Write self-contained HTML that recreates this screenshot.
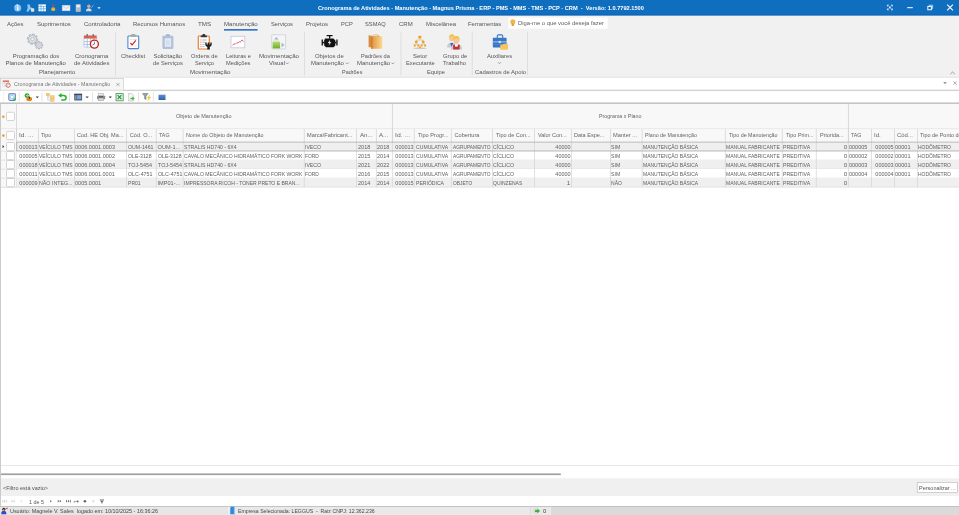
<!DOCTYPE html><html><head><meta charset="utf-8"><title>Cronograma de Atividades - Manutenção</title><style>
*{box-sizing:border-box;margin:0;padding:0}
html,body{width:959px;height:515px;overflow:hidden;background:#fff}
body{position:relative;font-family:"Liberation Sans",sans-serif;font-size:6px;color:#444}
.abs{position:absolute}
.t{position:absolute;white-space:pre;transform-origin:0 50%}
.t.r{transform-origin:100% 50%}
.t.c{transform-origin:50% 50%}
.rb{font-size:5.9px;color:#565656}
.g{font-size:5.6px;color:#606060}
.h{font-size:5.6px;color:#646464}
.cb{position:absolute;left:6.3px;width:8.4px;height:8.2px;background:#fff;border:0.6px solid #bdbdbd;border-radius:1.2px}
</style></head><body>
<svg class="abs" style="left:0;top:0" width="959" height="515" viewBox="0 0 959 515"><rect x="0" y="0" width="959" height="15.8" fill="#0f65b8"/><rect x="0" y="0" width="959" height="14" fill="#106ebe"/><rect x="0" y="15.8" width="959" height="61.4" fill="#f1f1f1"/><rect x="224" y="29.1" width="33.6" height="1.5" fill="#2268c0"/><rect x="508.5" y="17.6" width="99.2" height="11" fill="#fff"/><rect x="115" y="32.3" width="0.8" height="43" fill="#dadada"/><rect x="304" y="32.3" width="0.8" height="43" fill="#dadada"/><rect x="400.6" y="32.3" width="0.8" height="43" fill="#dadada"/><rect x="471.8" y="32.3" width="0.8" height="43" fill="#dadada"/><rect x="527.1" y="32.3" width="0.8" height="43" fill="#dadada"/><rect x="0" y="76.6" width="959" height="1.5" fill="#e9e9e9"/><rect x="0" y="78" width="959" height="11.6" fill="#fff"/><rect x="0" y="77.5" width="124" height="1" fill="#ececec"/><rect x="0.3" y="78.4" width="123.1" height="12" fill="#f6f6f6" stroke="#c6c6c6" stroke-width="0.6"/><rect x="0" y="89.4" width="959" height="0.9" fill="#e6e6e6"/><rect x="0" y="90.2" width="959" height="1" fill="#c8c8c8"/><rect x="0.7" y="89.4" width="122.4" height="1.2" fill="#f0f0f0"/><rect x="0" y="91.2" width="959" height="10.9" fill="#fff"/><rect x="0" y="102" width="959" height="1" fill="#dcdcdc"/><rect x="0" y="103" width="959" height="1" fill="#c4c4c4"/><rect x="0" y="104" width="959" height="362" fill="#fff"/><rect x="0.8" y="104" width="958.2" height="25.1" fill="#f8f8f8"/><rect x="0.8" y="128.7" width="958.2" height="0.7" fill="#cdcdcd"/><rect x="0.8" y="129.1" width="958.2" height="12.9" fill="#f8f8f8"/><rect x="16.15" y="104" width="0.7" height="38" fill="#cdcdcd"/><rect x="391.95" y="104" width="0.7" height="38" fill="#cdcdcd"/><rect x="847.95" y="104" width="0.7" height="38" fill="#cdcdcd"/><rect x="16.15" y="129.1" width="0.7" height="58.2" fill="#d2d2d2"/><rect x="38.05" y="129.1" width="0.7" height="58.2" fill="#d2d2d2"/><rect x="74.15" y="129.1" width="0.7" height="58.2" fill="#d2d2d2"/><rect x="126.05" y="129.1" width="0.7" height="58.2" fill="#d2d2d2"/><rect x="155.85" y="129.1" width="0.7" height="58.2" fill="#d2d2d2"/><rect x="182.75" y="129.1" width="0.7" height="58.2" fill="#d2d2d2"/><rect x="303.85" y="129.1" width="0.7" height="58.2" fill="#d2d2d2"/><rect x="356.05" y="129.1" width="0.7" height="58.2" fill="#d2d2d2"/><rect x="375.95" y="129.1" width="0.7" height="58.2" fill="#d2d2d2"/><rect x="391.95" y="129.1" width="0.7" height="58.2" fill="#d2d2d2"/><rect x="413.85" y="129.1" width="0.7" height="58.2" fill="#d2d2d2"/><rect x="450.95" y="129.1" width="0.7" height="58.2" fill="#d2d2d2"/><rect x="492.05" y="129.1" width="0.7" height="58.2" fill="#d2d2d2"/><rect x="534.05" y="129.1" width="0.7" height="58.2" fill="#d2d2d2"/><rect x="571.05" y="129.1" width="0.7" height="58.2" fill="#d2d2d2"/><rect x="610.05" y="129.1" width="0.7" height="58.2" fill="#d2d2d2"/><rect x="641.75" y="129.1" width="0.7" height="58.2" fill="#d2d2d2"/><rect x="724.95" y="129.1" width="0.7" height="58.2" fill="#d2d2d2"/><rect x="781.85" y="129.1" width="0.7" height="58.2" fill="#d2d2d2"/><rect x="815.85" y="129.1" width="0.7" height="58.2" fill="#d2d2d2"/><rect x="847.95" y="129.1" width="0.7" height="58.2" fill="#d2d2d2"/><rect x="871.15" y="129.1" width="0.7" height="58.2" fill="#d2d2d2"/><rect x="894.25" y="129.1" width="0.7" height="58.2" fill="#d2d2d2"/><rect x="917.15" y="129.1" width="0.7" height="58.2" fill="#d2d2d2"/><rect x="0.8" y="142.1" width="958.2" height="9" fill="#efefef"/><rect x="0.8" y="150.75" width="958.2" height="0.7" fill="#dcdcdc"/><rect x="0.8" y="151.1" width="958.2" height="9" fill="#fff"/><rect x="0.8" y="159.75" width="958.2" height="0.7" fill="#dcdcdc"/><rect x="0.8" y="160.1" width="958.2" height="9" fill="#efefef"/><rect x="0.8" y="168.75" width="958.2" height="0.7" fill="#dcdcdc"/><rect x="0.8" y="169.1" width="958.2" height="9" fill="#fff"/><rect x="0.8" y="177.75" width="958.2" height="0.7" fill="#dcdcdc"/><rect x="0.8" y="178.1" width="958.2" height="9" fill="#efefef"/><rect x="0.8" y="186.75" width="958.2" height="0.7" fill="#dcdcdc"/><rect x="16.15" y="142.1" width="0.7" height="45" fill="#d4d4d4"/><rect x="38.05" y="142.1" width="0.7" height="45" fill="#d4d4d4"/><rect x="74.15" y="142.1" width="0.7" height="45" fill="#d4d4d4"/><rect x="126.05" y="142.1" width="0.7" height="45" fill="#d4d4d4"/><rect x="155.85" y="142.1" width="0.7" height="45" fill="#d4d4d4"/><rect x="182.75" y="142.1" width="0.7" height="45" fill="#d4d4d4"/><rect x="303.85" y="142.1" width="0.7" height="45" fill="#d4d4d4"/><rect x="356.05" y="142.1" width="0.7" height="45" fill="#d4d4d4"/><rect x="375.95" y="142.1" width="0.7" height="45" fill="#d4d4d4"/><rect x="391.95" y="142.1" width="0.7" height="45" fill="#d4d4d4"/><rect x="413.85" y="142.1" width="0.7" height="45" fill="#d4d4d4"/><rect x="450.95" y="142.1" width="0.7" height="45" fill="#d4d4d4"/><rect x="492.05" y="142.1" width="0.7" height="45" fill="#d4d4d4"/><rect x="534.05" y="142.1" width="0.7" height="45" fill="#d4d4d4"/><rect x="571.05" y="142.1" width="0.7" height="45" fill="#d4d4d4"/><rect x="610.05" y="142.1" width="0.7" height="45" fill="#d4d4d4"/><rect x="641.75" y="142.1" width="0.7" height="45" fill="#d4d4d4"/><rect x="724.95" y="142.1" width="0.7" height="45" fill="#d4d4d4"/><rect x="781.85" y="142.1" width="0.7" height="45" fill="#d4d4d4"/><rect x="815.85" y="142.1" width="0.7" height="45" fill="#d4d4d4"/><rect x="847.95" y="142.1" width="0.7" height="45" fill="#d4d4d4"/><rect x="871.15" y="142.1" width="0.7" height="45" fill="#d4d4d4"/><rect x="894.25" y="142.1" width="0.7" height="45" fill="#d4d4d4"/><rect x="917.15" y="142.1" width="0.7" height="45" fill="#d4d4d4"/><rect x="0.9" y="142.1" width="15.5" height="45" fill="#f8f8f8"/><rect x="0.9" y="150.75" width="15.5" height="0.7" fill="#dcdcdc"/><rect x="0.9" y="159.75" width="15.5" height="0.7" fill="#dcdcdc"/><rect x="0.9" y="168.75" width="15.5" height="0.7" fill="#dcdcdc"/><rect x="0.9" y="177.75" width="15.5" height="0.7" fill="#dcdcdc"/><rect x="0.9" y="186.75" width="15.5" height="0.7" fill="#dcdcdc"/><rect x="16.5" y="141.7" width="942.5" height="0.8" fill="#adadad"/><rect x="16.5" y="150.6" width="942.5" height="0.8" fill="#adadad"/><rect x="16.4" y="142.1" width="0.8" height="9" fill="#a4a4a4"/><rect x="0.8" y="465" width="958.2" height="0.7" fill="#dedede"/><rect x="0.8" y="473.4" width="560" height="1.7" fill="#a0a0a0"/><rect x="0" y="478.3" width="959" height="18" fill="#f0f0f0"/><rect x="917.2" y="482.3" width="40.4" height="10.4" fill="#fff" stroke="#b4b4b4" stroke-width="0.6"/><rect x="0" y="496.3" width="959" height="9.7" fill="#fff"/><rect x="0" y="506" width="959" height="9" fill="#dadada"/><rect x="0" y="506" width="228" height="9" fill="#e6e6e6"/><rect x="228.4" y="506" width="322" height="9" fill="#e9e9e9"/><rect x="0" y="506" width="959" height="0.7" fill="#b4b4b4"/><rect x="228" y="506.5" width="0.6" height="8.5" fill="#f8f8f8"/><rect x="530.5" y="506.5" width="0.6" height="8.5" fill="#cfcfcf"/><rect x="550.5" y="506.5" width="0.6" height="8.5" fill="#f4f4f4"/><rect x="0" y="104" width="0.9" height="402" fill="#c6c6c6"/><rect x="6.5" y="142.5" width="8" height="8.2" rx="1.2" fill="#fff" stroke="#c2c2c2" stroke-width="0.7"/><rect x="6.5" y="151.5" width="8" height="8.2" rx="1.2" fill="#fff" stroke="#c2c2c2" stroke-width="0.7"/><rect x="6.5" y="160.5" width="8" height="8.2" rx="1.2" fill="#fff" stroke="#c2c2c2" stroke-width="0.7"/><rect x="6.5" y="169.5" width="8" height="8.2" rx="1.2" fill="#fff" stroke="#c2c2c2" stroke-width="0.7"/><rect x="6.5" y="178.5" width="8" height="8.2" rx="1.2" fill="#fff" stroke="#c2c2c2" stroke-width="0.7"/><rect x="6.5" y="112.3" width="8" height="8.2" rx="1.2" fill="#fff" stroke="#c2c2c2" stroke-width="0.7"/><rect x="6.5" y="131.4" width="8" height="8.2" rx="1.2" fill="#fff" stroke="#c2c2c2" stroke-width="0.7"/></svg>
<div id="txt" class="abs" style="left:0;top:0;width:959px;height:515px;will-change:transform">
<span class="t " style="transform:scaleX(0.974);left:317.50px;top:3.60px;line-height:8px;height:8px;color:#fff;font-size:5.8px;font-weight:bold">Cronograma de Atividades - Manutenção - Magnus Prisma - ERP - PMS - MMS - TMS - PCP - CRM  -  Versão: 1.0.7792.1500</span>
<span class="t rb" style="transform:scaleX(0.968);left:7.20px;top:20.30px;line-height:8px;height:8px;font-size:6.1px">Ações</span>
<span class="t rb" style="transform:scaleX(0.988);left:36.80px;top:19.60px;line-height:8px;height:8px;font-size:6.1px">Suprimentos</span>
<span class="t rb" style="left:83.90px;top:19.60px;line-height:8px;height:8px;font-size:6.1px">Controladoria</span>
<span class="t rb" style="transform:scaleX(0.974);left:133.10px;top:19.60px;line-height:8px;height:8px;font-size:6.1px">Recursos Humanos</span>
<span class="t rb" style="transform:scaleX(1.025);left:198.00px;top:19.60px;line-height:8px;height:8px;font-size:6.1px">TMS</span>
<span class="t rb" style="transform:scaleX(1.005);left:223.80px;top:19.60px;line-height:8px;height:8px;font-size:6.1px">Manutenção</span>
<span class="t rb" style="transform:scaleX(0.941);left:270.60px;top:19.60px;line-height:8px;height:8px;font-size:6.1px">Serviços</span>
<span class="t rb" style="transform:scaleX(0.984);left:306.00px;top:19.60px;line-height:8px;height:8px;font-size:6.1px">Projetos</span>
<span class="t rb" style="transform:scaleX(0.934);left:340.80px;top:19.60px;line-height:8px;height:8px;font-size:6.1px">PCP</span>
<span class="t rb" style="transform:scaleX(0.940);left:365.40px;top:19.60px;line-height:8px;height:8px;font-size:6.1px">SSMAQ</span>
<span class="t rb" style="transform:scaleX(0.986);left:399.00px;top:19.60px;line-height:8px;height:8px;font-size:6.1px">CRM</span>
<span class="t rb" style="transform:scaleX(0.973);left:425.60px;top:19.60px;line-height:8px;height:8px;font-size:6.1px">Miscelânea</span>
<span class="t rb" style="transform:scaleX(0.964);left:468.10px;top:19.60px;line-height:8px;height:8px;font-size:6.1px">Ferramentas</span>
<span class="t rb" style="transform:scaleX(1.011);left:518.00px;top:18.70px;line-height:8px;height:8px;color:#606060;font-size:5.8px">Diga-me o que você deseja fazer</span>
<span class="t rb" style="left:12.80px;top:52.10px;line-height:8px;height:8px;">Programação dos</span>
<span class="t rb" style="left:5.60px;top:59.40px;line-height:8px;height:8px;">Planos de Manutenção</span>
<span class="t rb" style="transform:scaleX(1.020);left:74.80px;top:52.10px;line-height:8px;height:8px;">Cronograma</span>
<span class="t rb" style="transform:scaleX(1.010);left:74.00px;top:59.40px;line-height:8px;height:8px;">de Atividades</span>
<span class="t rb" style="transform:scaleX(1.012);left:121.00px;top:52.10px;line-height:8px;height:8px;">Checklist</span>
<span class="t rb" style="left:153.50px;top:52.10px;line-height:8px;height:8px;">Solicitação</span>
<span class="t rb" style="transform:scaleX(0.971);left:152.80px;top:59.40px;line-height:8px;height:8px;">de Serviços</span>
<span class="t rb" style="transform:scaleX(0.967);left:190.60px;top:52.10px;line-height:8px;height:8px;">Ordens de</span>
<span class="t rb" style="transform:scaleX(0.967);left:194.50px;top:59.40px;line-height:8px;height:8px;">Serviço</span>
<span class="t rb" style="transform:scaleX(0.962);left:225.60px;top:52.10px;line-height:8px;height:8px;">Leituras e</span>
<span class="t rb" style="transform:scaleX(0.968);left:226.10px;top:59.40px;line-height:8px;height:8px;">Medições</span>
<span class="t rb" style="transform:scaleX(1.044);left:259.00px;top:52.10px;line-height:8px;height:8px;">Movimentação</span>
<span class="t rb" style="left:269.00px;top:59.40px;line-height:8px;height:8px;">Visual</span>
<span class="t rb" style="transform:scaleX(1.007);left:314.80px;top:52.10px;line-height:8px;height:8px;">Objetos de</span>
<span class="t rb" style="transform:scaleX(1.015);left:310.60px;top:59.40px;line-height:8px;height:8px;">Manutenção</span>
<span class="t rb" style="transform:scaleX(0.956);left:360.60px;top:52.10px;line-height:8px;height:8px;">Padrões da</span>
<span class="t rb" style="transform:scaleX(1.021);left:356.80px;top:59.40px;line-height:8px;height:8px;">Manutenção</span>
<span class="t rb" style="left:413.10px;top:52.10px;line-height:8px;height:8px;">Setor</span>
<span class="t rb" style="transform:scaleX(0.977);left:406.10px;top:59.40px;line-height:8px;height:8px;">Executante</span>
<span class="t rb" style="transform:scaleX(0.989);left:442.60px;top:52.10px;line-height:8px;height:8px;">Grupo de</span>
<span class="t rb" style="transform:scaleX(0.994);left:443.10px;top:59.40px;line-height:8px;height:8px;">Trabalho</span>
<span class="t rb" style="transform:scaleX(0.983);left:487.30px;top:52.10px;line-height:8px;height:8px;">Auxiliares</span>
<span class="t rb" style="transform:scaleX(1.005);left:39.00px;top:68.30px;line-height:8px;height:8px;">Planejamento</span>
<span class="t rb" style="transform:scaleX(1.054);left:189.80px;top:68.30px;line-height:8px;height:8px;">Movimentação</span>
<span class="t rb" style="transform:scaleX(0.929);left:342.30px;top:68.30px;line-height:8px;height:8px;">Padrões</span>
<span class="t rb" style="transform:scaleX(0.976);left:427.30px;top:68.30px;line-height:8px;height:8px;">Equipe</span>
<span class="t rb" style="transform:scaleX(0.992);left:474.50px;top:68.30px;line-height:8px;height:8px;">Cadastros de Apoio</span>
<span class="t g" style="transform:scaleX(0.946);left:13.80px;top:80.00px;line-height:8px;height:8px;color:#767676">Cronograma de Atividades - Manutenção</span>
<span class="t h" style="transform:scaleX(0.980);left:176.00px;top:112.30px;line-height:8px;height:8px;">Objeto de Manutenção</span>
<span class="t h" style="transform:scaleX(0.947);left:598.60px;top:112.30px;line-height:8px;height:8px;">Programa x Plano</span>
<span class="t h" style="transform:scaleX(1.158);left:18.80px;top:131.40px;line-height:8px;height:8px;">Id. ...</span>
<span class="t h" style="transform:scaleX(0.954);left:41.20px;top:131.40px;line-height:8px;height:8px;">Tipo</span>
<span class="t h" style="transform:scaleX(0.988);left:76.80px;top:131.40px;line-height:8px;height:8px;">Cod. HE Obj. Ma...</span>
<span class="t h" style="left:129.80px;top:131.40px;line-height:8px;height:8px;">Cód. O...</span>
<span class="t h" style="transform:scaleX(0.955);left:159.40px;top:131.40px;line-height:8px;height:8px;">TAG</span>
<span class="t h" style="transform:scaleX(0.958);left:186.10px;top:131.40px;line-height:8px;height:8px;">Nome do Objeto de Manutenção</span>
<span class="t h" style="transform:scaleX(1.007);left:306.80px;top:131.40px;line-height:8px;height:8px;">Marca\Fabricant...</span>
<span class="t h" style="transform:scaleX(1.103);left:359.50px;top:131.40px;line-height:8px;height:8px;">An...</span>
<span class="t h" style="transform:scaleX(1.094);left:379.00px;top:131.40px;line-height:8px;height:8px;">A...</span>
<span class="t h" style="transform:scaleX(1.214);left:395.10px;top:131.40px;line-height:8px;height:8px;">Id. ...</span>
<span class="t h" style="transform:scaleX(1.004);left:417.80px;top:131.40px;line-height:8px;height:8px;">Tipo Progr...</span>
<span class="t h" style="left:454.50px;top:131.40px;line-height:8px;height:8px;">Cobertura</span>
<span class="t h" style="transform:scaleX(0.990);left:495.60px;top:131.40px;line-height:8px;height:8px;">Tipo de Con...</span>
<span class="t h" style="transform:scaleX(0.985);left:537.80px;top:131.40px;line-height:8px;height:8px;">Valor Con...</span>
<span class="t h" style="transform:scaleX(0.987);left:574.00px;top:131.40px;line-height:8px;height:8px;">Data Espe...</span>
<span class="t h" style="transform:scaleX(1.019);left:613.10px;top:131.40px;line-height:8px;height:8px;">Manter ...</span>
<span class="t h" style="transform:scaleX(0.953);left:644.80px;top:131.40px;line-height:8px;height:8px;">Plano de Manutenção</span>
<span class="t h" style="transform:scaleX(0.955);left:728.80px;top:131.40px;line-height:8px;height:8px;">Tipo de Manutenção</span>
<span class="t h" style="transform:scaleX(0.972);left:785.60px;top:131.40px;line-height:8px;height:8px;">Tipo Prim...</span>
<span class="t h" style="transform:scaleX(0.990);left:819.50px;top:131.40px;line-height:8px;height:8px;">Priorida...</span>
<span class="t h" style="transform:scaleX(0.946);left:851.10px;top:131.40px;line-height:8px;height:8px;">TAG</span>
<span class="t h" style="transform:scaleX(1.091);left:874.40px;top:131.40px;line-height:8px;height:8px;">Id.</span>
<span class="t h" style="transform:scaleX(1.058);left:896.90px;top:131.40px;line-height:8px;height:8px;">Cód...</span>
<span class="t h" style="transform:scaleX(0.983);left:920.20px;top:131.40px;line-height:8px;height:8px;">Tipo de Ponto de Controle</span>
<span class="t g r" style="transform:scaleX(0.981);right:921.40px;top:142.80px;line-height:9.0px;height:9.0px;">000013</span>
<span class="t g" style="transform:scaleX(0.888);left:38.75px;top:142.80px;line-height:9.0px;height:9.0px;">VEÍCULO TMS</span>
<span class="t g" style="transform:scaleX(0.989);left:75.05px;top:142.80px;line-height:9.0px;height:9.0px;">0006.0001.0003</span>
<span class="t g" style="transform:scaleX(0.932);left:127.55px;top:142.80px;line-height:9.0px;height:9.0px;">OUM-1461</span>
<span class="t g" style="left:157.55px;top:142.80px;line-height:9.0px;height:9.0px;">OUM-1...</span>
<span class="t g" style="transform:scaleX(0.919);left:183.95px;top:142.80px;line-height:9.0px;height:9.0px;">STRALIS HD740 - 6X4</span>
<span class="t g" style="transform:scaleX(0.918);left:305.05px;top:142.80px;line-height:9.0px;height:9.0px;">IVECO</span>
<span class="t g" style="transform:scaleX(0.994);left:357.75px;top:142.80px;line-height:9.0px;height:9.0px;">2018</span>
<span class="t g" style="transform:scaleX(0.994);left:377.25px;top:142.80px;line-height:9.0px;height:9.0px;">2018</span>
<span class="t g r" style="transform:scaleX(0.981);right:545.30px;top:142.80px;line-height:9.0px;height:9.0px;">000013</span>
<span class="t g" style="transform:scaleX(0.914);left:415.55px;top:142.80px;line-height:9.0px;height:9.0px;">CUMULATIVA</span>
<span class="t g" style="transform:scaleX(0.866);left:452.75px;top:142.80px;line-height:9.0px;height:9.0px;">AGRUPAMENTO</span>
<span class="t g" style="transform:scaleX(0.925);left:493.45px;top:142.80px;line-height:9.0px;height:9.0px;">CÍCLICO</span>
<span class="t g r" style="transform:scaleX(0.977);right:388.60px;top:142.80px;line-height:9.0px;height:9.0px;">40000</span>
<span class="t g" style="transform:scaleX(0.924);left:611.05px;top:142.80px;line-height:9.0px;height:9.0px;">SIM</span>
<span class="t g" style="transform:scaleX(0.892);left:643.05px;top:142.80px;line-height:9.0px;height:9.0px;">MANUTENÇÃO BÁSICA</span>
<span class="t g" style="transform:scaleX(0.900);left:726.45px;top:142.80px;line-height:9.0px;height:9.0px;">MANUAL FABRICANTE</span>
<span class="t g" style="transform:scaleX(0.934);left:783.05px;top:142.80px;line-height:9.0px;height:9.0px;">PREDITIVA</span>
<span class="t g r" style="transform:scaleX(1.110);right:111.60px;top:142.80px;line-height:9.0px;height:9.0px;">0</span>
<span class="t g" style="transform:scaleX(0.981);left:849.05px;top:142.80px;line-height:9.0px;height:9.0px;">000005</span>
<span class="t g r" style="transform:scaleX(0.981);right:65.30px;top:142.80px;line-height:9.0px;height:9.0px;">000005</span>
<span class="t g" style="transform:scaleX(0.996);left:895.05px;top:142.80px;line-height:9.0px;height:9.0px;">00001</span>
<span class="t g" style="transform:scaleX(0.892);left:917.75px;top:142.80px;line-height:9.0px;height:9.0px;">HODÔMETRO</span>
<span class="t g r" style="transform:scaleX(0.981);right:921.40px;top:151.80px;line-height:9.0px;height:9.0px;">000005</span>
<span class="t g" style="transform:scaleX(0.888);left:38.75px;top:151.80px;line-height:9.0px;height:9.0px;">VEÍCULO TMS</span>
<span class="t g" style="transform:scaleX(0.989);left:75.05px;top:151.80px;line-height:9.0px;height:9.0px;">0006.0001.0002</span>
<span class="t g" style="transform:scaleX(0.922);left:127.55px;top:151.80px;line-height:9.0px;height:9.0px;">OLE-3128</span>
<span class="t g" style="transform:scaleX(0.922);left:157.55px;top:151.80px;line-height:9.0px;height:9.0px;">OLE-3128</span>
<span class="t g" style="transform:scaleX(0.908);left:183.95px;top:151.80px;line-height:9.0px;height:9.0px;">CAVALO MECÂNICO HIDRAMÁTICO FORK WORK</span>
<span class="t g" style="transform:scaleX(0.876);left:305.05px;top:151.80px;line-height:9.0px;height:9.0px;">FORD</span>
<span class="t g" style="transform:scaleX(0.994);left:357.75px;top:151.80px;line-height:9.0px;height:9.0px;">2015</span>
<span class="t g" style="transform:scaleX(0.994);left:377.25px;top:151.80px;line-height:9.0px;height:9.0px;">2014</span>
<span class="t g r" style="transform:scaleX(0.981);right:545.30px;top:151.80px;line-height:9.0px;height:9.0px;">000013</span>
<span class="t g" style="transform:scaleX(0.914);left:415.55px;top:151.80px;line-height:9.0px;height:9.0px;">CUMULATIVA</span>
<span class="t g" style="transform:scaleX(0.866);left:452.75px;top:151.80px;line-height:9.0px;height:9.0px;">AGRUPAMENTO</span>
<span class="t g" style="transform:scaleX(0.925);left:493.45px;top:151.80px;line-height:9.0px;height:9.0px;">CÍCLICO</span>
<span class="t g r" style="transform:scaleX(0.977);right:388.60px;top:151.80px;line-height:9.0px;height:9.0px;">40000</span>
<span class="t g" style="transform:scaleX(0.924);left:611.05px;top:151.80px;line-height:9.0px;height:9.0px;">SIM</span>
<span class="t g" style="transform:scaleX(0.892);left:643.05px;top:151.80px;line-height:9.0px;height:9.0px;">MANUTENÇÃO BÁSICA</span>
<span class="t g" style="transform:scaleX(0.900);left:726.45px;top:151.80px;line-height:9.0px;height:9.0px;">MANUAL FABRICANTE</span>
<span class="t g" style="transform:scaleX(0.934);left:783.05px;top:151.80px;line-height:9.0px;height:9.0px;">PREDITIVA</span>
<span class="t g r" style="transform:scaleX(1.110);right:111.60px;top:151.80px;line-height:9.0px;height:9.0px;">0</span>
<span class="t g" style="transform:scaleX(0.981);left:849.05px;top:151.80px;line-height:9.0px;height:9.0px;">000002</span>
<span class="t g r" style="transform:scaleX(0.981);right:65.30px;top:151.80px;line-height:9.0px;height:9.0px;">000002</span>
<span class="t g" style="transform:scaleX(0.996);left:895.05px;top:151.80px;line-height:9.0px;height:9.0px;">00001</span>
<span class="t g" style="transform:scaleX(0.892);left:917.75px;top:151.80px;line-height:9.0px;height:9.0px;">HODÔMETRO</span>
<span class="t g r" style="transform:scaleX(0.981);right:921.40px;top:160.80px;line-height:9.0px;height:9.0px;">000018</span>
<span class="t g" style="transform:scaleX(0.888);left:38.75px;top:160.80px;line-height:9.0px;height:9.0px;">VEÍCULO TMS</span>
<span class="t g" style="transform:scaleX(0.989);left:75.05px;top:160.80px;line-height:9.0px;height:9.0px;">0006.0001.0004</span>
<span class="t g" style="transform:scaleX(0.964);left:127.55px;top:160.80px;line-height:9.0px;height:9.0px;">TOJ-5454</span>
<span class="t g" style="transform:scaleX(0.964);left:157.55px;top:160.80px;line-height:9.0px;height:9.0px;">TOJ-5454</span>
<span class="t g" style="transform:scaleX(0.919);left:183.95px;top:160.80px;line-height:9.0px;height:9.0px;">STRALIS HD740 - 6X4</span>
<span class="t g" style="transform:scaleX(0.918);left:305.05px;top:160.80px;line-height:9.0px;height:9.0px;">IVECO</span>
<span class="t g" style="transform:scaleX(0.994);left:357.75px;top:160.80px;line-height:9.0px;height:9.0px;">2021</span>
<span class="t g" style="transform:scaleX(0.994);left:377.25px;top:160.80px;line-height:9.0px;height:9.0px;">2022</span>
<span class="t g r" style="transform:scaleX(0.981);right:545.30px;top:160.80px;line-height:9.0px;height:9.0px;">000013</span>
<span class="t g" style="transform:scaleX(0.914);left:415.55px;top:160.80px;line-height:9.0px;height:9.0px;">CUMULATIVA</span>
<span class="t g" style="transform:scaleX(0.866);left:452.75px;top:160.80px;line-height:9.0px;height:9.0px;">AGRUPAMENTO</span>
<span class="t g" style="transform:scaleX(0.925);left:493.45px;top:160.80px;line-height:9.0px;height:9.0px;">CÍCLICO</span>
<span class="t g r" style="transform:scaleX(0.977);right:388.60px;top:160.80px;line-height:9.0px;height:9.0px;">40000</span>
<span class="t g" style="transform:scaleX(0.924);left:611.05px;top:160.80px;line-height:9.0px;height:9.0px;">SIM</span>
<span class="t g" style="transform:scaleX(0.892);left:643.05px;top:160.80px;line-height:9.0px;height:9.0px;">MANUTENÇÃO BÁSICA</span>
<span class="t g" style="transform:scaleX(0.900);left:726.45px;top:160.80px;line-height:9.0px;height:9.0px;">MANUAL FABRICANTE</span>
<span class="t g" style="transform:scaleX(0.934);left:783.05px;top:160.80px;line-height:9.0px;height:9.0px;">PREDITIVA</span>
<span class="t g r" style="transform:scaleX(1.110);right:111.60px;top:160.80px;line-height:9.0px;height:9.0px;">0</span>
<span class="t g" style="transform:scaleX(0.981);left:849.05px;top:160.80px;line-height:9.0px;height:9.0px;">000003</span>
<span class="t g r" style="transform:scaleX(0.981);right:65.30px;top:160.80px;line-height:9.0px;height:9.0px;">000003</span>
<span class="t g" style="transform:scaleX(0.996);left:895.05px;top:160.80px;line-height:9.0px;height:9.0px;">00001</span>
<span class="t g" style="transform:scaleX(0.892);left:917.75px;top:160.80px;line-height:9.0px;height:9.0px;">HODÔMETRO</span>
<span class="t g r" style="right:921.40px;top:169.80px;line-height:9.0px;height:9.0px;">000011</span>
<span class="t g" style="transform:scaleX(0.888);left:38.75px;top:169.80px;line-height:9.0px;height:9.0px;">VEÍCULO TMS</span>
<span class="t g" style="transform:scaleX(0.984);left:75.05px;top:169.80px;line-height:9.0px;height:9.0px;">0006.0001.0001</span>
<span class="t g" style="transform:scaleX(0.945);left:127.55px;top:169.80px;line-height:9.0px;height:9.0px;">OLC-4751</span>
<span class="t g" style="transform:scaleX(0.945);left:157.55px;top:169.80px;line-height:9.0px;height:9.0px;">OLC-4751</span>
<span class="t g" style="transform:scaleX(0.908);left:183.95px;top:169.80px;line-height:9.0px;height:9.0px;">CAVALO MECÂNICO HIDRAMÁTICO FORK WORK</span>
<span class="t g" style="transform:scaleX(0.876);left:305.05px;top:169.80px;line-height:9.0px;height:9.0px;">FORD</span>
<span class="t g" style="transform:scaleX(0.994);left:357.75px;top:169.80px;line-height:9.0px;height:9.0px;">2016</span>
<span class="t g" style="transform:scaleX(0.994);left:377.25px;top:169.80px;line-height:9.0px;height:9.0px;">2015</span>
<span class="t g r" style="transform:scaleX(0.981);right:545.30px;top:169.80px;line-height:9.0px;height:9.0px;">000013</span>
<span class="t g" style="transform:scaleX(0.914);left:415.55px;top:169.80px;line-height:9.0px;height:9.0px;">CUMULATIVA</span>
<span class="t g" style="transform:scaleX(0.866);left:452.75px;top:169.80px;line-height:9.0px;height:9.0px;">AGRUPAMENTO</span>
<span class="t g" style="transform:scaleX(0.925);left:493.45px;top:169.80px;line-height:9.0px;height:9.0px;">CÍCLICO</span>
<span class="t g r" style="transform:scaleX(0.977);right:388.60px;top:169.80px;line-height:9.0px;height:9.0px;">40000</span>
<span class="t g" style="transform:scaleX(0.924);left:611.05px;top:169.80px;line-height:9.0px;height:9.0px;">SIM</span>
<span class="t g" style="transform:scaleX(0.892);left:643.05px;top:169.80px;line-height:9.0px;height:9.0px;">MANUTENÇÃO BÁSICA</span>
<span class="t g" style="transform:scaleX(0.900);left:726.45px;top:169.80px;line-height:9.0px;height:9.0px;">MANUAL FABRICANTE</span>
<span class="t g" style="transform:scaleX(0.934);left:783.05px;top:169.80px;line-height:9.0px;height:9.0px;">PREDITIVA</span>
<span class="t g r" style="transform:scaleX(1.110);right:111.60px;top:169.80px;line-height:9.0px;height:9.0px;">0</span>
<span class="t g" style="transform:scaleX(0.981);left:849.05px;top:169.80px;line-height:9.0px;height:9.0px;">000004</span>
<span class="t g r" style="transform:scaleX(0.981);right:65.30px;top:169.80px;line-height:9.0px;height:9.0px;">000004</span>
<span class="t g" style="transform:scaleX(0.996);left:895.05px;top:169.80px;line-height:9.0px;height:9.0px;">00001</span>
<span class="t g" style="transform:scaleX(0.892);left:917.75px;top:169.80px;line-height:9.0px;height:9.0px;">HODÔMETRO</span>
<span class="t g r" style="transform:scaleX(0.981);right:921.40px;top:178.80px;line-height:9.0px;height:9.0px;">000009</span>
<span class="t g" style="transform:scaleX(0.948);left:38.75px;top:178.80px;line-height:9.0px;height:9.0px;">NÃO INTEG...</span>
<span class="t g" style="transform:scaleX(0.990);left:75.05px;top:178.80px;line-height:9.0px;height:9.0px;">0005.0001</span>
<span class="t g" style="transform:scaleX(0.907);left:127.55px;top:178.80px;line-height:9.0px;height:9.0px;">PR01</span>
<span class="t g" style="left:157.55px;top:178.80px;line-height:9.0px;height:9.0px;">IMP01-...</span>
<span class="t g" style="transform:scaleX(0.898);left:183.95px;top:178.80px;line-height:9.0px;height:9.0px;">IMPRESSORA RICOH - TONER PRETO E BRAN...</span>
<span class="t g" style="transform:scaleX(0.994);left:357.75px;top:178.80px;line-height:9.0px;height:9.0px;">2014</span>
<span class="t g" style="transform:scaleX(0.994);left:377.25px;top:178.80px;line-height:9.0px;height:9.0px;">2014</span>
<span class="t g r" style="transform:scaleX(0.981);right:545.30px;top:178.80px;line-height:9.0px;height:9.0px;">000015</span>
<span class="t g" style="transform:scaleX(0.910);left:415.55px;top:178.80px;line-height:9.0px;height:9.0px;">PERIÓDICA</span>
<span class="t g" style="transform:scaleX(0.862);left:452.75px;top:178.80px;line-height:9.0px;height:9.0px;">OBJETO</span>
<span class="t g" style="transform:scaleX(0.898);left:493.45px;top:178.80px;line-height:9.0px;height:9.0px;">QUINZENAS</span>
<span class="t g r" style="transform:scaleX(1.110);right:388.60px;top:178.80px;line-height:9.0px;height:9.0px;">1</span>
<span class="t g" style="transform:scaleX(0.899);left:611.05px;top:178.80px;line-height:9.0px;height:9.0px;">NÃO</span>
<span class="t g" style="transform:scaleX(0.892);left:643.05px;top:178.80px;line-height:9.0px;height:9.0px;">MANUTENÇÃO BÁSICA</span>
<span class="t g" style="transform:scaleX(0.900);left:726.45px;top:178.80px;line-height:9.0px;height:9.0px;">MANUAL FABRICANTE</span>
<span class="t g" style="transform:scaleX(0.934);left:783.05px;top:178.80px;line-height:9.0px;height:9.0px;">PREDITIVA</span>
<span class="t g r" style="transform:scaleX(1.110);right:111.60px;top:178.80px;line-height:9.0px;height:9.0px;">0</span>
<span class="t g" style="transform:scaleX(0.937);left:3.40px;top:483.80px;line-height:8px;height:8px;color:#505050;font-size:5.9px">&lt;Filtro está vazio&gt;</span>
<span class="t g" style="transform:scaleX(0.984);left:918.70px;top:483.90px;line-height:8px;height:8px;color:#555;font-size:5.6px">Personalizar ...</span>
<span class="t g" style="transform:scaleX(0.915);left:29.20px;top:497.60px;line-height:8px;height:8px;color:#585858;font-size:5.9px">1 de 5</span>
<span class="t g" style="transform:scaleX(0.920);left:10.00px;top:507.30px;line-height:8px;height:8px;color:#484848;font-size:5.9px">Usuário: Magnele V. Sales  logado em: 10/10/2025 - 16:36:26</span>
<span class="t g" style="transform:scaleX(0.879);left:238.10px;top:507.30px;line-height:8px;height:8px;color:#484848;font-size:5.9px">Empresa Selecionada: LEGGUS  -  Raiz CNPJ: 12.362.236</span>
<span class="t g" style="left:543.10px;top:507.30px;line-height:8px;height:8px;color:#484848;font-size:5.9px">0</span>
</div>
<svg class="abs" style="left:0;top:0" width="959" height="515" viewBox="0 0 959 515"><defs><linearGradient id="gB" x1="0" y1="0" x2="1" y2="0"><stop offset="0" stop-color="#e09040"/><stop offset="1" stop-color="#fbd98c"/></linearGradient><linearGradient id="gG" x1="0" y1="0" x2="0" y2="1"><stop offset="0" stop-color="#b5dc6a"/><stop offset="1" stop-color="#6fae2c"/></linearGradient><linearGradient id="gS" x1="0" y1="0" x2="0" y2="1"><stop offset="0" stop-color="#5b8fd0"/><stop offset="1" stop-color="#2f62a8"/></linearGradient></defs><circle cx="17.700" cy="7.900" r="3.500" fill="#86c2f2"/><path d="M14.900 6.600a3.100 3.100 0 0 1 3.200-1.900" stroke="#d8eefc" stroke-width=".8" fill="none"/><rect x="17.100" y="7" width="1.300" height="3.300" fill="#fff"/><circle cx="17.750" cy="5.800" r=".8" fill="#fff"/><path d="M27.300 4.500h2.600l.4 2.800 1.600.4 1.200 1.300v2.600h-1.800l-.5-2-1.200-.2-.8 2.200h-2.400l1.300-3.600z" fill="#86c8f8"/><rect x="31.200" y="8.400" width="3" height="3.200" fill="#f3ecd6"/><path d="M31.700 9.500h2M31.700 10.500h2" stroke="#d8cca8" stroke-width=".4"/><rect x="38.5" y="4.4" width="7.4" height="6.9" fill="#fff"/><path d="M38.5 6.4h7.4M41 4.4v6.9M43.6 6.4v4.9M38.5 8.8h7.4" stroke="#3c8ee0" stroke-width=".6" fill="none"/><circle cx="53.2" cy="9.2" r="1.9" fill="#f5b32a"/><circle cx="53.1" cy="5.6" r="1" fill="#e53a3a"/><circle cx="55.8" cy="8" r=".7" fill="#3a62d8"/><circle cx="55.9" cy="10" r=".6" fill="#3aa84a"/><rect x="62.2" y="5.3" width="7.8" height="5.5" fill="#f2f2f2" stroke="#c9d4e4" stroke-width=".5"/><path d="M62.6 5.8l3.5 2.8 3.5-2.8" stroke="#b9c2d0" stroke-width=".6" fill="none"/><rect x="75.8" y="4.2" width="4.9" height="7.5" rx=".6" fill="#c9ccd2"/><rect x="76.6" y="5" width="3.3" height="2" fill="#e8eefa"/><path d="M76.7 8.4h3.1M76.7 9.6h3.1M76.7 10.7h3.1" stroke="#9a9fa8" stroke-width=".5"/><circle cx="88.8" cy="6.3" r="1.7" fill="#b9b4a8"/><path d="M86 11.3c0-2.2 1.2-3 2.8-3s2.8.8 2.8 3z" fill="#d8d8d8"/><path d="M90.7 6.6l1 .9 1.9-2.6" stroke="#9aa7b5" stroke-width=".8" fill="none"/><path d="M97.4 7.3h3.2l-1.6 1.7z" fill="#fff"/><g stroke="#fff" stroke-width="1" fill="none"><path d="M907.2 7.7h5.6"/><path d="M947.2 4.6l5.7 5.7M952.9 4.6l-5.7 5.7" stroke-width="1.1"/></g><g transform="translate(929.9 7.7) scale(.88) translate(-929.9 -7.7)"><rect x="927.500" y="6.300" width="4.100" height="3.700" fill="none" stroke="#f0f5fc" stroke-width="1.150"/><path d="M929 5.900v-1h4v3.700h-1" fill="none" stroke="#e6eefa" stroke-width=".850"/></g><g transform="translate(889.850 7.450) scale(.9) translate(-889.850 -7.450)"><g stroke="#e4eefa" stroke-width="1.050" fill="none"><path d="M887.100 6.300v-1.500h1.500M891.100 4.800h1.500v1.500M892.600 8.600v1.500h-1.500M888.600 10.100h-1.500v-1.500"/><path d="M887.600 5.300l1.300 1.300M892.100 5.300l-1.300 1.300M892.100 9.600l-1.300-1.300M887.600 9.600l1.300-1.300" stroke-width=".7"/></g><rect x="888.900" y="6.500" width="1.900" height="1.900" fill="#e4eefa"/></g><circle cx="512.800" cy="21.700" r="2.500" fill="#f3b544"/><path d="M511.500 23.600h2.600v1.600c0 .5-.4.800-.9.800h-.8c-.5 0-.9-.3-.9-.8z" fill="#d9a04a"/><path d="M37.80 39.34L37.44 41.13L36.13 40.89L35.43 41.93L36.14 43.05L34.63 44.06L33.87 42.96L32.64 43.20L32.36 44.50L30.57 44.14L30.81 42.83L29.77 42.13L28.65 42.84L27.64 41.33L28.74 40.57L28.50 39.34L27.20 39.06L27.56 37.27L28.87 37.51L29.57 36.47L28.86 35.35L30.37 34.34L31.13 35.44L32.36 35.20L32.64 33.90L34.43 34.26L34.19 35.57L35.23 36.27L36.35 35.56L37.36 37.07L36.26 37.83L36.50 39.06z" fill="#c9ced6" stroke="#949ba7" stroke-width=".5"/><path d="M42.84 44.53L42.84 45.87L41.82 45.88L41.47 46.72L42.19 47.44L41.24 48.39L40.52 47.67L39.68 48.02L39.67 49.04L38.33 49.04L38.32 48.02L37.48 47.67L36.76 48.39L35.81 47.44L36.53 46.72L36.18 45.88L35.16 45.87L35.16 44.53L36.18 44.52L36.53 43.68L35.81 42.96L36.76 42.01L37.48 42.73L38.32 42.38L38.33 41.36L39.67 41.36L39.68 42.38L40.52 42.73L41.24 42.01L42.19 42.96L41.47 43.68L41.82 44.52z" fill="#c9ced6" stroke="#949ba7" stroke-width=".5"/><circle cx="32.5" cy="39.2" r="2.7" fill="none" stroke="#eceef2" stroke-width=".9"/><circle cx="39" cy="45.2" r="2" fill="none" stroke="#eceef2" stroke-width=".7"/><circle cx="32.5" cy="39.2" r="1.6" fill="#f4f4f4" stroke="#a2a8b2" stroke-width=".5"/><circle cx="39" cy="45.2" r="1.2" fill="#f4f4f4" stroke="#a2a8b2" stroke-width=".5"/><rect x="84" y="35.6" width="12.6" height="11.6" rx=".8" fill="#fff" stroke="#9db5d8" stroke-width=".6"/><rect x="84" y="35.6" width="12.6" height="3" fill="#e2604c"/><path d="M84 41.6h12M84 44.4h8M87.2 38.6v8.6M90.4 38.6v8.6M93.6 38.6v3" stroke="#7a9fd8" stroke-width=".6" fill="none"/><rect x="86.6" y="34" width="1.2" height="2.6" fill="#666"/><rect x="92.6" y="34" width="1.2" height="2.6" fill="#666"/><circle cx="94.4" cy="44.1" r="4" fill="#fff" stroke="#c2201f" stroke-width="1.3"/><path d="M94.4 44.1v-2.4M94.4 44.1l-2 1" stroke="#444" stroke-width=".7" fill="none"/><rect x="127.9" y="36" width="10.8" height="12.6" rx=".8" fill="#fff" stroke="#4a84cc" stroke-width="1.050"/><path d="M130.600 36.800v-1.400c0-.900 1.200-1.500 2.700-1.500s2.700.600 2.700 1.500v1.400z" fill="#a8a8a8"/><path d="M130.4 39.5h1.5M133.4 39.5h3.4M130.4 46h1.5M134.6 46h2.2" stroke="#b8c4d8" stroke-width=".6"/><path d="M130.4 43l1.8 1.9 3.6-4.6" stroke="#d42020" stroke-width="1.1" fill="none"/><rect x="162.4" y="35.7" width="11" height="13.2" rx=".8" fill="#b3c2da"/><rect x="164.400" y="38" width="7" height="9" fill="#e6ecf5" stroke="#9fb2cf" stroke-width=".400"/><path d="M165.6 36v-.7c0-.7 1-1.1 2.3-1.1s2.3.4 2.3 1.1v.7z" fill="#9db2d2"/><path d="M166.5 39.8v5.4M167.9 39.8v5.4M169.3 39.8v5.4" stroke="#b8c6de" stroke-width=".5"/><rect x="198.3" y="36" width="11" height="13" rx=".6" fill="#fff" stroke="#ef7f2e" stroke-width="1.2"/><path d="M200.7 37.2v-1.8h1.6c0-.9.6-1.4 1.500-1.400s1.500.5 1.500 1.400h1.600v1.800z" fill="#333"/><path d="M200.500 40h.9M200.500 42.200h.9M200.500 44.400h.9M200.500 46.600h.9" stroke="#e03030" stroke-width=".8"/><path d="M202.300 40h4.200M202.300 42.200h3.200M202.300 44.400h2.200M202.300 46.600h2.200" stroke="#888" stroke-width=".6"/><path d="M205.300 42.600v1.700c0 1.300.800 2.200 2 2.500v2.800h2.400v-2.800c1.200-.300 2-1.200 2-2.500v-1.700h-1.400v2h-1v-2h-1.600v2h-1v-2z" fill="#1e1e1e"/><rect x="231" y="36.300" width="13.800" height="11.500" fill="#fff" stroke="#c2c5e2" stroke-width=".8"/><path d="M232.500 45l1.600-1.200 1 .5 1.800-1.800 1 .6 1.500-1.500.8.700 1.700-2.400 1.700 1.500" stroke="#e04848" stroke-width=".8" fill="none"/><rect x="271.700" y="34.700" width="13.900" height="14.200" rx=".6" fill="#f3f5f9" stroke="#c6cbd8" stroke-width=".7"/><rect x="272.600" y="41.600" width="7.500" height="6.800" fill="url(#gG)"/><path d="M274.200 39.500l2.200-2.600 2.200 2.600z" fill="#a9aeb8"/><path d="M281.600 42.500l2.700 2.500-2.700 2.500z" fill="#a9aeb8"/><path d="M273.500 40.600h5.800" stroke="#c6cbd8" stroke-width=".4"/><g fill="#111"><rect x="326.600" y="35" width="6" height="1.200"/><rect x="329" y="36" width="1.300" height="2.600"/><path d="M325 38.600h8.500l1.800 1.800v5l-1.800 1.800h-7.500l-1.800-1.800v-5z"/><rect x="321.600" y="39.500" width="1.300" height="6"/><rect x="322.500" y="41.800" width="2.500" height="1.500"/><rect x="336.300" y="39.500" width="1.300" height="6"/><rect x="335" y="41.800" width="1.600" height="1.500"/></g><path d="M330.200 39.800l-2.400 3.200h1.700l-1 2.800 2.800-3.500h-1.700z" fill="#fff"/><path d="M368.600 35.300l8.600-.7 2.400 1.500v11.200l-11-.1z" fill="#d98a3c"/><path d="M369.200 35.200l8 -0.300 2 1.300-8 .3z" fill="#f5e3c0"/><rect x="371.200" y="36.600" width="11" height="12.200" rx=".5" fill="url(#gB)"/><rect x="371.200" y="36.600" width="1.200" height="12.200" fill="#c97a30"/><ellipse cx="420" cy="48.200" rx="7" ry=".7" fill="#c8c8c8"/><path d="M419.800 38.500v1.600M416.300 41.200v-1.100h7v1.100M416.300 43v1.200M414.700 45v-.9h3.400v.9M423.200 43v1.200M421.600 45v-.9h3.400v.9M419.900 44v2" stroke="#aaa" stroke-width=".5" fill="none"/><g fill="#f7a11a"><rect x="418.300" y="35.800" width="3" height="2.800" rx=".4"/><rect x="415" y="40.700" width="2.600" height="2.400" rx=".4"/><rect x="421.900" y="40.700" width="2.600" height="2.400" rx=".4"/><rect x="413.700" y="44.600" width="2" height="1.900" rx=".3"/><rect x="417.200" y="44.600" width="2" height="1.900" rx=".3"/><rect x="420.700" y="44.600" width="2" height="1.900" rx=".3"/><rect x="424.100" y="44.600" width="2" height="1.900" rx=".3"/><rect x="418.900" y="46.400" width="2" height="1.600" rx=".3"/></g><path d="M447 47.500c0-3.500 1.800-5 4.800-5s4.800 1.500 4.800 5z" fill="#c8ccd8"/><path d="M450.200 43l1.500 4.300 1.500-4.300z" fill="#3a62c0"/><circle cx="451.800" cy="38.600" r="2.700" fill="#f2c89a"/><path d="M448.800 38.200c0-2.600 1.400-4 3.100-4s3.100 1.400 3.100 4c-1-1.400-2-2-3.100-2s-2.200.6-3.100 2z" fill="#eec03c"/><path d="M450.800 49.500c0-3.800 2-5.400 5.600-5.400s5.600 1.600 5.600 5.400z" fill="#c8c8c8"/><rect x="453.200" y="44.800" width="6.400" height="4.700" rx=".5" fill="#c23030"/><rect x="455" y="44.200" width="2.800" height="2.400" fill="#fff"/><circle cx="456.400" cy="40.800" r="2.900" fill="#f2c89a"/><path d="M453.200 40.400c0-2.800 1.500-4.300 3.300-4.300s3.300 1.500 3.300 4.300c-1-1.500-2.100-2.100-3.300-2.100s-2.300.6-3.300 2.100z" fill="#eec03c"/><path d="M497.300 38.200v-2.200c0-.7.500-1.100 1.100-1.100h3.200c.6 0 1.100.4 1.100 1.100v2.200" stroke="#3777c6" stroke-width="1.100" fill="none"/><rect x="492.800" y="37.800" width="13.800" height="9.800" rx=".8" fill="#3777c6"/><path d="M492.800 41.900h13.800" stroke="#dfeaf8" stroke-width=".7"/><rect x="498.700" y="40.900" width="2" height="2.200" fill="#dfeaf8"/><path d="M492.800 44.500h7" stroke="#6a9ad8" stroke-width=".4"/><path d="M500.300 44.600h2.600l.8-.9h3.600c.5 0 .8.300.8.800v4.400c0 .5-.3.800-.8.800h-6.200c-.5 0-.8-.3-.8-.8z" fill="#f6c560"/><g stroke="#666" stroke-width=".6" fill="none"><path d="M285.9 62.6l1.4 1.4 1.4-1.400"/><path d="M345.900 62.600l1.400 1.400 1.400-1.400"/><path d="M391.400 62.600l1.400 1.400 1.400-1.400"/><path d="M498 62.200l1.500 1.500 1.500-1.500"/></g><path d="M950.400 74.100l2.200-2.100 2.200 2.100" stroke="#707070" stroke-width=".65" fill="none"/><path d="M943.200 82.300h3.600l-1.800 1.800z" fill="#777"/><path d="M953.400 81.400l3.400 3.400M956.800 81.400l-3.400 3.400" stroke="#808080" stroke-width=".6"/><rect x="2.800" y="80.700" width="6.200" height="5.600" rx=".4" fill="#fff" stroke="#a9bddc" stroke-width=".4"/><rect x="2.800" y="80.500" width="6.200" height="1.600" fill="#e4705e"/><path d="M2.800 83.600h3M4.800 82v4.200" stroke="#9ab4dc" stroke-width=".35"/><circle cx="8.100" cy="85.200" r="2.100" fill="#fff" stroke="#cc3a38" stroke-width=".75"/><path d="M8.100 85.200v-1.100M8.100 85.200l-.9.400" stroke="#666" stroke-width=".4"/><path d="M116.300 83.200l3.200 2.600M119.500 83.200l-3.200 2.600" stroke="#777" stroke-width=".55"/><g transform="translate(0,0.4)"><g fill="#b0b0b0"><rect x="3.500" y="92.300" width=".6" height=".6"/><rect x="3.500" y="94.300" width=".6" height=".6"/><rect x="3.500" y="96.300" width=".6" height=".6"/><rect x="3.500" y="98.300" width=".6" height=".6"/><rect x="3.500" y="100.300" width=".6" height=".6"/></g><g stroke="#d2d2d2" stroke-width=".6"><path d="M19.300 92v9.500M42 92v9.500M69.500 92v9.500M92.500 92v9.500M138.500 92v9.500M153.300 92v9.500"/></g><rect x="8.800" y="93.300" width="6.600" height="6.800" rx="1" fill="#cfe2f6" stroke="#3a78c8" stroke-width=".9"/><circle cx="12" cy="96.600" r="1.800" fill="#fff" stroke="#7aa6dc" stroke-width=".5"/><path d="M8.500 93.600l1-1M15.700 93.600l-1-1" stroke="#f0a030" stroke-width=".9"/><path d="M13.300 98.300h1.300v-1l1.600 1.700-1.600 1.700v-1h-1.300z" fill="#38b838"/><circle cx="27" cy="95.200" r="2.400" fill="#2fa62f"/><path d="M25.800 95.200h2.500M27.300 94l1.200 1.200-1.200 1.200" stroke="#fff" stroke-width=".6" fill="none"/><ellipse cx="29.200" cy="98.600" rx="2.900" ry="2.200" fill="#d88a18"/><rect x="28.800" y="96.200" width="1.200" height="2.200" fill="#333"/><path d="M35.600 96h3.400l-1.700 1.800z" fill="#444"/><g fill="#f3cf72" stroke="#c9a040" stroke-width=".3"><rect x="46.200" y="92.800" width="3.300" height="2.500"/><rect x="50.600" y="95.300" width="3.500" height="2.500"/><rect x="50.600" y="98.400" width="3.500" height="2.500"/></g><path d="M47.800 95.300v4.400h2.800M47.800 96.600h2.800" stroke="#aaa" stroke-width=".5" fill="none"/><path d="M61 95h2.600c1.500 0 2.500.9 2.500 2.300s-1 2.300-2.500 2.300h-2.300" stroke="#22b522" stroke-width="1.500" fill="none"/><path d="M58.200 95l3.300-2.400v4.800z" fill="#22b522"/><rect x="74.200" y="93.400" width="7.900" height="6.700" fill="#59647a"/><rect x="76.800" y="94.800" width="4.300" height="3.900" fill="#7ea3d8"/><rect x="74.200" y="93.400" width="7.900" height="1" fill="#39414f"/><rect x="75" y="95" width="1.200" height="4" fill="#8994a8"/><path d="M85.400 96h3.400l-1.700 1.800z" fill="#444"/><rect x="98.700" y="93" width="4.800" height="2.500" fill="#e8e8e8" stroke="#999" stroke-width=".4"/><rect x="97" y="95.300" width="8.200" height="3.500" rx=".6" fill="#8d8d8d"/><rect x="98.600" y="97.600" width="5" height="2.800" fill="#d8d8d8" stroke="#888" stroke-width=".4"/><rect x="99" y="96" width="4.200" height=".9" fill="#444"/><path d="M108.600 96h3.400l-1.700 1.800z" fill="#444"/><rect x="116" y="93.200" width="7.200" height="7.200" fill="#dff0df" stroke="#3f9a4a" stroke-width=".8"/><path d="M117.600 94.800l3.800 4M121.400 94.800l-3.800 4" stroke="#2f8a3c" stroke-width="1.100"/><path d="M128.400 93.200h3.400l1.700 1.700v5.600h-5.100z" fill="#f6f6f6" stroke="#aaa" stroke-width=".5"/><path d="M130.400 97.300h2v-1.200l2.300 2-2.300 2v-1.200h-2z" fill="#44b844"/><path d="M142.500 93.200h5.600l-2.100 2.600v3.400l-1.400-.9v-2.500z" fill="#9aa3ad" stroke="#5a6570" stroke-width=".5"/><path d="M149.700 94.400l-2.400 3.300h1.400l-1 2.800 3-3.800h-1.500z" fill="#f2d024" stroke="#c8a800" stroke-width=".2"/><rect x="158.500" y="94.300" width="7" height="5.300" fill="url(#gS)"/></g><circle cx="3.400" cy="116.700" r="1.300" fill="#f59a2e"/><circle cx="3.400" cy="135.600" r="1.300" fill="#f59a2e"/><path d="M2.500 145l1.800 1.600-1.800 1.600z" fill="#444"/><g fill="#d2d2d2"><rect x="2.500" y="499.700" width=".7" height="3"/><path d="M5 499.700v3l-1.700-1.500zM7 499.700v3l-1.700-1.500z"/><path d="M12.500 499.700v3l-1.700-1.500zM14.800 499.700v3l-1.700-1.500z"/><path d="M21.700 499.900v2.600l-1.400-1.300z"/></g><g fill="#666"><path d="M50.200 499.900v2.600l1.500-1.300z"/><path d="M57.800 499.800v2.800l1.500-1.400zM59.800 499.800v2.800l1.500-1.400z"/><path d="M66 499.800v2.800l1.500-1.400zM68 499.800v2.800l1.500-1.400z"/><rect x="70" y="499.800" width=".7" height="2.800"/><circle cx="84.900" cy="501.200" r="1.300"/><path d="M99.800 499.600h4.200v.9h-4.200zM100.300 500.900h3.200l-1.100 1.300v1.200h-1v-1.200z"/></g><path d="M74.200 502.800v-1.400h3.800" stroke="#666" stroke-width=".6" fill="none"/><path d="M77.300 499.900l1.600 1.500-1.600 1.500z" fill="#666"/><path d="M93.300 499.800v2.900M92 500.500l2.600 1.500M94.600 500.500l-2.600 1.500" stroke="#d0d0d0" stroke-width=".5"/><circle cx="3.800" cy="509.300" r="1.600" fill="#3a2a20"/><path d="M1.200 514.300c0-2.600 1-3.500 2.600-3.500s2.600.9 2.600 3.500z" fill="#2a4ad0"/><path d="M5.200 508.400l2.300-1v1.800z" fill="#e03030"/><rect x="2.800" y="509.300" width="1.600" height="1.700" fill="#e8a060"/><path d="M230.300 507.600l1-.8h3.600v7.400h-4.600z" fill="#2f86e0"/><path d="M233.800 506.800h1.200v7.400h-1.200z" fill="#8cc4f6"/><circle cx="536.300" cy="510.800" r="3" fill="#dcdcdc" stroke="#bbb" stroke-width=".4" stroke-dasharray=".8 .6"/><path d="M535 510h2.300v-1.200l2.800 2.200-2.800 2.200v-1.200h-2.300z" fill="#3cb43c"/></svg>
</body></html>
